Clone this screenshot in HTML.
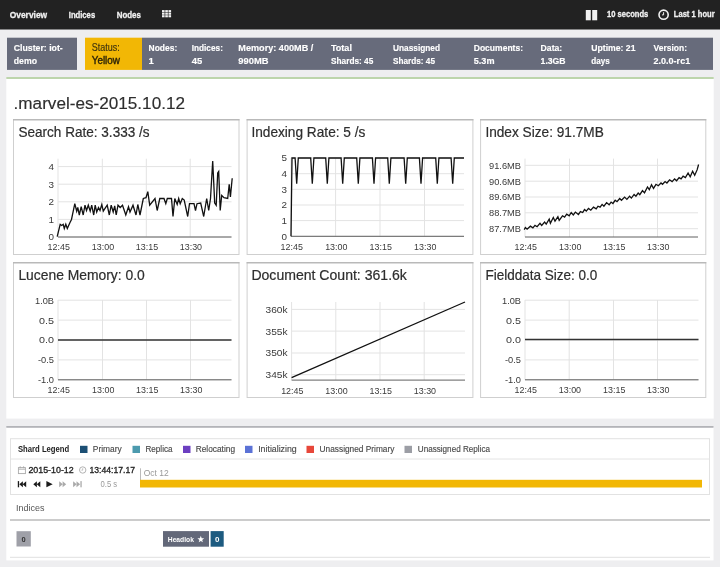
<!DOCTYPE html>
<html><head><meta charset="utf-8"><title>Marvel</title>
<style>html,body{margin:0;padding:0;background:#eeeef0;overflow:hidden;width:720px;height:567px}svg{display:block;transform:translateZ(0);will-change:transform}</style>
</head><body>
<svg width="720" height="567" viewBox="0 0 720 567" font-family='"Liberation Sans", sans-serif'><rect x="0" y="0" width="720" height="567" fill="#eeeef0" />
<rect x="0" y="0" width="720" height="29.5" fill="#222222" />
<text x="9.7" y="17.7" font-size="9.3" fill="#f2f2f2" font-weight="700" text-anchor="start" textLength="37.5" lengthAdjust="spacingAndGlyphs"  stroke="#f2f2f2" stroke-width="0.3">Overview</text>
<text x="68.75" y="17.7" font-size="9.3" fill="#f2f2f2" font-weight="700" text-anchor="start" textLength="26.4" lengthAdjust="spacingAndGlyphs"  stroke="#f2f2f2" stroke-width="0.3">Indices</text>
<text x="116.7" y="17.7" font-size="9.3" fill="#f2f2f2" font-weight="700" text-anchor="start" textLength="24.2" lengthAdjust="spacingAndGlyphs"  stroke="#f2f2f2" stroke-width="0.3">Nodes</text>
<rect x="162.0" y="10.1" width="2.6" height="2.1" fill="#f2f2f2" />
<rect x="162.0" y="12.649999999999999" width="2.6" height="2.1" fill="#f2f2f2" />
<rect x="162.0" y="15.2" width="2.6" height="2.1" fill="#f2f2f2" />
<rect x="165.25" y="10.1" width="2.6" height="2.1" fill="#f2f2f2" />
<rect x="165.25" y="12.649999999999999" width="2.6" height="2.1" fill="#f2f2f2" />
<rect x="165.25" y="15.2" width="2.6" height="2.1" fill="#f2f2f2" />
<rect x="168.5" y="10.1" width="2.6" height="2.1" fill="#f2f2f2" />
<rect x="168.5" y="12.649999999999999" width="2.6" height="2.1" fill="#f2f2f2" />
<rect x="168.5" y="15.2" width="2.6" height="2.1" fill="#f2f2f2" />
<rect x="585.8" y="10" width="5" height="10.3" fill="#f2f2f2" />
<rect x="592.2" y="10" width="5" height="10.3" fill="#f2f2f2" />
<text x="607" y="17.1" font-size="9.0" fill="#f2f2f2" font-weight="700" text-anchor="start" textLength="41.3" lengthAdjust="spacingAndGlyphs"  stroke="#f2f2f2" stroke-width="0.3">10 seconds</text>
<circle cx="663.6" cy="14.7" r="4.6" fill="none" stroke="#f2f2f2" stroke-width="1.6"/>
<path d="M663.6 12.2 V14.9 H662" fill="none" stroke="#f2f2f2" stroke-width="1"/>
<text x="673.8" y="17.0" font-size="9.0" fill="#f2f2f2" font-weight="700" text-anchor="start" textLength="40.8" lengthAdjust="spacingAndGlyphs"  stroke="#f2f2f2" stroke-width="0.3">Last 1 hour</text>
<rect x="7" y="37.7" width="70" height="32.2" fill="#676b7b" />
<rect x="85" y="37.7" width="57" height="32.2" fill="#f2b705" />
<rect x="142" y="37.7" width="571" height="32.2" fill="#676b7b" />
<text x="13.7" y="51.1" font-size="9.6" fill="#ffffff" font-weight="700" text-anchor="start" textLength="49.1" lengthAdjust="spacingAndGlyphs"  stroke="#ffffff" stroke-width="0.15">Cluster: iot-</text>
<text x="13.7" y="63.9" font-size="9.6" fill="#ffffff" font-weight="700" text-anchor="start" textLength="23.3" lengthAdjust="spacingAndGlyphs"  stroke="#ffffff" stroke-width="0.15">demo</text>
<text x="91.7" y="51.1" font-size="10" fill="#3d3310" font-weight="400" text-anchor="start" textLength="28" lengthAdjust="spacingAndGlyphs"  stroke="#3d3310" stroke-width="0.15">Status:</text>
<text x="91.7" y="63.9" font-size="10" fill="#2a2208" font-weight="400" text-anchor="start" textLength="28.3" lengthAdjust="spacingAndGlyphs"  stroke="#2a2208" stroke-width="0.35">Yellow</text>
<text x="148.6" y="51.1" font-size="9.6" fill="#ffffff" font-weight="700" text-anchor="start" textLength="28.6" lengthAdjust="spacingAndGlyphs"  stroke="#ffffff" stroke-width="0.15">Nodes:</text>
<text x="148.6" y="63.9" font-size="9.6" fill="#ffffff" font-weight="700" text-anchor="start"  stroke="#ffffff" stroke-width="0.15">1</text>
<text x="191.7" y="51.1" font-size="9.6" fill="#ffffff" font-weight="700" text-anchor="start" textLength="31.2" lengthAdjust="spacingAndGlyphs"  stroke="#ffffff" stroke-width="0.15">Indices:</text>
<text x="191.7" y="63.9" font-size="9.6" fill="#ffffff" font-weight="700" text-anchor="start" textLength="10.5" lengthAdjust="spacingAndGlyphs"  stroke="#ffffff" stroke-width="0.15">45</text>
<text x="238.3" y="51.1" font-size="9.6" fill="#ffffff" font-weight="700" text-anchor="start" textLength="75" lengthAdjust="spacingAndGlyphs"  stroke="#ffffff" stroke-width="0.15">Memory: 400MB /</text>
<text x="238.3" y="63.9" font-size="9.6" fill="#ffffff" font-weight="700" text-anchor="start" textLength="30.2" lengthAdjust="spacingAndGlyphs"  stroke="#ffffff" stroke-width="0.15">990MB</text>
<text x="331" y="51.1" font-size="9.6" fill="#ffffff" font-weight="700" text-anchor="start" textLength="20.9" lengthAdjust="spacingAndGlyphs"  stroke="#ffffff" stroke-width="0.15">Total</text>
<text x="331" y="63.9" font-size="9.6" fill="#ffffff" font-weight="700" text-anchor="start" textLength="42.3" lengthAdjust="spacingAndGlyphs"  stroke="#ffffff" stroke-width="0.15">Shards: 45</text>
<text x="393" y="51.1" font-size="9.6" fill="#ffffff" font-weight="700" text-anchor="start" textLength="47" lengthAdjust="spacingAndGlyphs"  stroke="#ffffff" stroke-width="0.15">Unassigned</text>
<text x="393" y="63.9" font-size="9.6" fill="#ffffff" font-weight="700" text-anchor="start" textLength="42" lengthAdjust="spacingAndGlyphs"  stroke="#ffffff" stroke-width="0.15">Shards: 45</text>
<text x="473.75" y="51.1" font-size="9.6" fill="#ffffff" font-weight="700" text-anchor="start" textLength="49.25" lengthAdjust="spacingAndGlyphs"  stroke="#ffffff" stroke-width="0.15">Documents:</text>
<text x="473.75" y="63.9" font-size="9.6" fill="#ffffff" font-weight="700" text-anchor="start" textLength="20.75" lengthAdjust="spacingAndGlyphs"  stroke="#ffffff" stroke-width="0.15">5.3m</text>
<text x="540.6" y="51.1" font-size="9.6" fill="#ffffff" font-weight="700" text-anchor="start" textLength="21.6" lengthAdjust="spacingAndGlyphs"  stroke="#ffffff" stroke-width="0.15">Data:</text>
<text x="540.6" y="63.9" font-size="9.6" fill="#ffffff" font-weight="700" text-anchor="start" textLength="25" lengthAdjust="spacingAndGlyphs"  stroke="#ffffff" stroke-width="0.15">1.3GB</text>
<text x="591.2" y="51.1" font-size="9.6" fill="#ffffff" font-weight="700" text-anchor="start" textLength="44.3" lengthAdjust="spacingAndGlyphs"  stroke="#ffffff" stroke-width="0.15">Uptime: 21</text>
<text x="591.2" y="63.9" font-size="9.6" fill="#ffffff" font-weight="700" text-anchor="start" textLength="18.5" lengthAdjust="spacingAndGlyphs"  stroke="#ffffff" stroke-width="0.15">days</text>
<text x="653.5" y="51.1" font-size="9.6" fill="#ffffff" font-weight="700" text-anchor="start" textLength="33.5" lengthAdjust="spacingAndGlyphs"  stroke="#ffffff" stroke-width="0.15">Version:</text>
<text x="653.5" y="63.9" font-size="9.6" fill="#ffffff" font-weight="700" text-anchor="start" textLength="36.7" lengthAdjust="spacingAndGlyphs"  stroke="#ffffff" stroke-width="0.15">2.0.0-rc1</text>
<rect x="6.3" y="77" width="707.4" height="341.6" fill="#ffffff" />
<rect x="6.3" y="77.3" width="707.4" height="1.4" fill="#a2c489" />
<text x="13.6" y="108.8" font-size="16.3" fill="#2e2e2e" font-weight="400" text-anchor="start" textLength="171.4" lengthAdjust="spacingAndGlyphs"  stroke="#2e2e2e" stroke-width="0.15">.marvel-es-2015.10.12</text>
<rect x="13.5" y="119.5" width="225.5" height="135" fill="#ffffff" stroke="#cfcfcf" stroke-width="1"/>
<line x1="13.0" y1="119.75" x2="239.5" y2="119.75" stroke="#b9b9b9" stroke-width="1.5" />
<text x="18.4" y="137.4" font-size="14.2" fill="#2e2e2e" font-weight="400" text-anchor="start" textLength="131.2" lengthAdjust="spacingAndGlyphs"  stroke="#2e2e2e" stroke-width="0.2">Search Rate: 3.333 /s</text>
<line x1="58" y1="237.0" x2="231.5" y2="237.0" stroke="#e3e3e3" stroke-width="1" />
<line x1="58" y1="219.4" x2="231.5" y2="219.4" stroke="#e3e3e3" stroke-width="1" />
<line x1="58" y1="201.8" x2="231.5" y2="201.8" stroke="#e3e3e3" stroke-width="1" />
<line x1="58" y1="184.2" x2="231.5" y2="184.2" stroke="#e3e3e3" stroke-width="1" />
<line x1="58" y1="166.6" x2="231.5" y2="166.6" stroke="#e3e3e3" stroke-width="1" />
<line x1="58" y1="158.7" x2="58" y2="237.0" stroke="#e3e3e3" stroke-width="1" />
<line x1="102.3" y1="158.7" x2="102.3" y2="237.0" stroke="#e3e3e3" stroke-width="1" />
<line x1="146.3" y1="158.7" x2="146.3" y2="237.0" stroke="#e3e3e3" stroke-width="1" />
<line x1="190.2" y1="158.7" x2="190.2" y2="237.0" stroke="#e3e3e3" stroke-width="1" />
<line x1="58" y1="237.0" x2="231.5" y2="237.0" stroke="#606060" stroke-width="1.0" />
<text x="54" y="240.4" font-size="9.6" fill="#3a3a3a" font-weight="400" text-anchor="end" textLength="5.5" lengthAdjust="spacingAndGlyphs" >0</text>
<text x="54" y="222.8" font-size="9.6" fill="#3a3a3a" font-weight="400" text-anchor="end" textLength="5.5" lengthAdjust="spacingAndGlyphs" >1</text>
<text x="54" y="205.20000000000002" font-size="9.6" fill="#3a3a3a" font-weight="400" text-anchor="end" textLength="5.5" lengthAdjust="spacingAndGlyphs" >2</text>
<text x="54" y="187.6" font-size="9.6" fill="#3a3a3a" font-weight="400" text-anchor="end" textLength="5.5" lengthAdjust="spacingAndGlyphs" >3</text>
<text x="54" y="170.0" font-size="9.6" fill="#3a3a3a" font-weight="400" text-anchor="end" textLength="5.5" lengthAdjust="spacingAndGlyphs" >4</text>
<text x="58.7" y="250.4" font-size="9.8" fill="#3a3a3a" font-weight="400" text-anchor="middle" textLength="22.3" lengthAdjust="spacingAndGlyphs" >12:45</text>
<text x="103.0" y="250.4" font-size="9.8" fill="#3a3a3a" font-weight="400" text-anchor="middle" textLength="22.3" lengthAdjust="spacingAndGlyphs" >13:00</text>
<text x="147.0" y="250.4" font-size="9.8" fill="#3a3a3a" font-weight="400" text-anchor="middle" textLength="22.3" lengthAdjust="spacingAndGlyphs" >13:15</text>
<text x="190.89999999999998" y="250.4" font-size="9.8" fill="#3a3a3a" font-weight="400" text-anchor="middle" textLength="22.3" lengthAdjust="spacingAndGlyphs" >13:30</text>
<path d="M57.2 236.7 L60.2 224.3 L61.7 225.5 L63.2 224.3 L64.3 228.5 L65.8 224.3 L67.3 228.5 L70.0 222.5 L71.5 219.5 L74.8 203.7 L76.7 211.2 L77.8 207.5 L79.3 215.0 L81.2 206.7 L83.2 215.0 L85.0 205.2 L86.5 210.5 L88.3 205.2 L90.2 211.2 L91.7 205.2 L93.7 215.0 L95.2 205.2 L96.7 212.0 L98.5 207.5 L100.0 210.5 L101.8 204.5 L103.3 211.2 L105.2 208.2 L107.2 205.2 L109.3 215.0 L111.2 205.2 L113.2 212.0 L114.7 205.9 L116.2 215.0 L118.0 205.2 L120.2 207.5 L122.5 205.2 L125.8 215.0 L128.5 206.7 L130.0 212.0 L133.0 205.2 L136.0 215.0 L137.8 204.5 L140.0 215.0 L143.3 198.5 L146.0 197.7 L147.8 191.7 L149.7 205.2 L155.0 198.5 L157.2 210.5 L159.8 198.5 L164.0 198.5 L165.8 203.7 L167.3 198.5 L171.5 198.5 L173.0 216.5 L174.8 198.5 L177.2 204.5 L178.7 198.5 L180.2 203.7 L182.3 198.5 L184.2 200.0 L187.7 216.5 L189.5 203.7 L194.0 203.7 L195.5 210.5 L197.0 203.7 L200.7 203.0 L203.7 216.5 L206.7 198.5 L208.7 210.5 L210.5 198.5 L212.7 161.0 L214.7 203.0 L216.2 205.2 L217.7 173.0 L218.7 171.5 L220.2 210.5 L221.7 195.5 L224.0 197.7 L227.7 198.5 L229.2 184.2 L230.4 197.0 L232.2 178.2" fill="none" stroke="#111111" stroke-width="1.3" stroke-linejoin="miter"/>
<rect x="247.1" y="119.5" width="225.79999999999998" height="135" fill="#ffffff" stroke="#cfcfcf" stroke-width="1"/>
<line x1="246.6" y1="119.75" x2="473.4" y2="119.75" stroke="#b9b9b9" stroke-width="1.5" />
<text x="251.4" y="137.4" font-size="14.2" fill="#2e2e2e" font-weight="400" text-anchor="start" textLength="114" lengthAdjust="spacingAndGlyphs"  stroke="#2e2e2e" stroke-width="0.2">Indexing Rate: 5 /s</text>
<line x1="291" y1="236.3" x2="464" y2="236.3" stroke="#e3e3e3" stroke-width="1" />
<line x1="291" y1="220.6" x2="464" y2="220.6" stroke="#e3e3e3" stroke-width="1" />
<line x1="291" y1="205" x2="464" y2="205" stroke="#e3e3e3" stroke-width="1" />
<line x1="291" y1="189.3" x2="464" y2="189.3" stroke="#e3e3e3" stroke-width="1" />
<line x1="291" y1="173.7" x2="464" y2="173.7" stroke="#e3e3e3" stroke-width="1" />
<line x1="291" y1="158" x2="464" y2="158" stroke="#e3e3e3" stroke-width="1" />
<line x1="291" y1="158" x2="291" y2="236.3" stroke="#e3e3e3" stroke-width="1" />
<line x1="335.6" y1="158" x2="335.6" y2="236.3" stroke="#e3e3e3" stroke-width="1" />
<line x1="380" y1="158" x2="380" y2="236.3" stroke="#e3e3e3" stroke-width="1" />
<line x1="424.5" y1="158" x2="424.5" y2="236.3" stroke="#e3e3e3" stroke-width="1" />
<line x1="291" y1="236.3" x2="464" y2="236.3" stroke="#606060" stroke-width="1.0" />
<text x="287" y="239.70000000000002" font-size="9.6" fill="#3a3a3a" font-weight="400" text-anchor="end" textLength="5.5" lengthAdjust="spacingAndGlyphs" >0</text>
<text x="287" y="224.0" font-size="9.6" fill="#3a3a3a" font-weight="400" text-anchor="end" textLength="5.5" lengthAdjust="spacingAndGlyphs" >1</text>
<text x="287" y="208.4" font-size="9.6" fill="#3a3a3a" font-weight="400" text-anchor="end" textLength="5.5" lengthAdjust="spacingAndGlyphs" >2</text>
<text x="287" y="192.70000000000002" font-size="9.6" fill="#3a3a3a" font-weight="400" text-anchor="end" textLength="5.5" lengthAdjust="spacingAndGlyphs" >3</text>
<text x="287" y="177.1" font-size="9.6" fill="#3a3a3a" font-weight="400" text-anchor="end" textLength="5.5" lengthAdjust="spacingAndGlyphs" >4</text>
<text x="287" y="161.4" font-size="9.6" fill="#3a3a3a" font-weight="400" text-anchor="end" textLength="5.5" lengthAdjust="spacingAndGlyphs" >5</text>
<text x="291.7" y="249.70000000000002" font-size="9.8" fill="#3a3a3a" font-weight="400" text-anchor="middle" textLength="22.3" lengthAdjust="spacingAndGlyphs" >12:45</text>
<text x="336.3" y="249.70000000000002" font-size="9.8" fill="#3a3a3a" font-weight="400" text-anchor="middle" textLength="22.3" lengthAdjust="spacingAndGlyphs" >13:00</text>
<text x="380.7" y="249.70000000000002" font-size="9.8" fill="#3a3a3a" font-weight="400" text-anchor="middle" textLength="22.3" lengthAdjust="spacingAndGlyphs" >13:15</text>
<text x="425.2" y="249.70000000000002" font-size="9.8" fill="#3a3a3a" font-weight="400" text-anchor="middle" textLength="22.3" lengthAdjust="spacingAndGlyphs" >13:30</text>
<path d="M291.0 236.3 L292.0 158.0 L295.1 158.0 L296.7 183.8 L298.3 158.0 L310.7 158.0 L312.3 183.8 L313.9 158.0 L325.7 158.0 L327.3 183.8 L328.9 158.0 L341.1 158.0 L342.7 183.8 L344.3 158.0 L356.7 158.0 L358.3 183.8 L359.9 158.0 L372.4 158.0 L374.0 183.8 L375.6 158.0 L387.7 158.0 L389.3 183.8 L390.9 158.0 L404.1 158.0 L405.7 183.8 L407.3 158.0 L419.4 158.0 L421.0 183.8 L422.6 158.0 L435.7 158.0 L437.3 183.8 L438.9 158.0 L451.1 158.0 L452.7 183.8 L454.3 158.0 L464.0 158.0" fill="none" stroke="#111111" stroke-width="1.3" stroke-linejoin="miter"/>
<rect x="480.6" y="119.5" width="225.19999999999993" height="135" fill="#ffffff" stroke="#cfcfcf" stroke-width="1"/>
<line x1="480.1" y1="119.75" x2="706.3" y2="119.75" stroke="#b9b9b9" stroke-width="1.5" />
<text x="485.4" y="137.4" font-size="14.2" fill="#2e2e2e" font-weight="400" text-anchor="start" textLength="118.4" lengthAdjust="spacingAndGlyphs"  stroke="#2e2e2e" stroke-width="0.2">Index Size: 91.7MB</text>
<line x1="525" y1="228.7" x2="698" y2="228.7" stroke="#e3e3e3" stroke-width="1" />
<line x1="525" y1="212.8" x2="698" y2="212.8" stroke="#e3e3e3" stroke-width="1" />
<line x1="525" y1="197" x2="698" y2="197" stroke="#e3e3e3" stroke-width="1" />
<line x1="525" y1="181.2" x2="698" y2="181.2" stroke="#e3e3e3" stroke-width="1" />
<line x1="525" y1="165.3" x2="698" y2="165.3" stroke="#e3e3e3" stroke-width="1" />
<line x1="525" y1="158.6" x2="525" y2="237" stroke="#e3e3e3" stroke-width="1" />
<line x1="569.5" y1="158.6" x2="569.5" y2="237" stroke="#e3e3e3" stroke-width="1" />
<line x1="613.5" y1="158.6" x2="613.5" y2="237" stroke="#e3e3e3" stroke-width="1" />
<line x1="657.5" y1="158.6" x2="657.5" y2="237" stroke="#e3e3e3" stroke-width="1" />
<line x1="525" y1="237" x2="698" y2="237" stroke="#606060" stroke-width="1.0" />
<text x="521" y="232.1" font-size="9.6" fill="#3a3a3a" font-weight="400" text-anchor="end" textLength="32" lengthAdjust="spacingAndGlyphs" >87.7MB</text>
<text x="521" y="216.20000000000002" font-size="9.6" fill="#3a3a3a" font-weight="400" text-anchor="end" textLength="32" lengthAdjust="spacingAndGlyphs" >88.7MB</text>
<text x="521" y="200.4" font-size="9.6" fill="#3a3a3a" font-weight="400" text-anchor="end" textLength="32" lengthAdjust="spacingAndGlyphs" >89.6MB</text>
<text x="521" y="184.6" font-size="9.6" fill="#3a3a3a" font-weight="400" text-anchor="end" textLength="32" lengthAdjust="spacingAndGlyphs" >90.6MB</text>
<text x="521" y="168.70000000000002" font-size="9.6" fill="#3a3a3a" font-weight="400" text-anchor="end" textLength="32" lengthAdjust="spacingAndGlyphs" >91.6MB</text>
<text x="525.7" y="250.4" font-size="9.8" fill="#3a3a3a" font-weight="400" text-anchor="middle" textLength="22.3" lengthAdjust="spacingAndGlyphs" >12:45</text>
<text x="570.2" y="250.4" font-size="9.8" fill="#3a3a3a" font-weight="400" text-anchor="middle" textLength="22.3" lengthAdjust="spacingAndGlyphs" >13:00</text>
<text x="614.2" y="250.4" font-size="9.8" fill="#3a3a3a" font-weight="400" text-anchor="middle" textLength="22.3" lengthAdjust="spacingAndGlyphs" >13:15</text>
<text x="658.2" y="250.4" font-size="9.8" fill="#3a3a3a" font-weight="400" text-anchor="middle" textLength="22.3" lengthAdjust="spacingAndGlyphs" >13:30</text>
<path d="M524.2 229.6 L525.4 227.5 L527.1 229.2 L530.4 226.2 L532.9 227.9 L535.0 225.4 L537.1 226.7 L540.0 223.3 L541.7 225.4 L544.6 222.1 L546.2 224.2 L549.2 219.2 L550.4 223.3 L553.3 217.5 L555.0 221.2 L557.9 216.7 L559.2 220.4 L562.5 215.8 L564.6 217.1 L566.7 214.2 L569.2 215.8 L571.2 212.5 L573.3 215.0 L575.4 212.1 L578.4 214.5 L580.4 211.6 L582.7 212.5 L584.5 209.6 L586.3 211.1 L588.5 208.4 L590.8 210.2 L593.5 207.1 L596.2 208.9 L598.0 206.2 L600.1 207.1 L602.1 204.4 L603.9 206.2 L606.6 202.6 L609.1 204.8 L611.1 202.1 L612.9 203.5 L615.2 200.3 L617.0 201.7 L619.7 198.5 L621.5 200.3 L624.6 197.1 L626.9 199.4 L629.6 196.2 L631.4 198.1 L634.1 194.4 L635.9 196.2 L638.2 193.1 L639.8 194.7 L642.5 190.6 L644.5 192.9 L647.5 187.0 L649.3 189.7 L651.5 184.8 L653.5 188.4 L656.0 184.3 L658.3 185.7 L661.0 183.0 L662.5 184.3 L665.1 181.6 L666.9 183.0 L669.6 179.8 L672.1 181.6 L674.6 178.9 L676.6 180.7 L679.1 177.6 L681.1 178.9 L683.1 176.2 L685.4 177.6 L688.1 173.0 L690.2 176.7 L692.6 171.2 L694.7 175.3 L697.1 169.9 L698.6 164.5" fill="none" stroke="#111111" stroke-width="1.3" stroke-linejoin="miter"/>
<rect x="13.5" y="262.5" width="225.5" height="135" fill="#ffffff" stroke="#cfcfcf" stroke-width="1"/>
<line x1="13.0" y1="262.75" x2="239.5" y2="262.75" stroke="#b9b9b9" stroke-width="1.5" />
<text x="18.4" y="280.4" font-size="14.2" fill="#2e2e2e" font-weight="400" text-anchor="start" textLength="126.4" lengthAdjust="spacingAndGlyphs"  stroke="#2e2e2e" stroke-width="0.2">Lucene Memory: 0.0</text>
<line x1="58" y1="379.8" x2="231.5" y2="379.8" stroke="#e3e3e3" stroke-width="1" />
<line x1="58" y1="359.9" x2="231.5" y2="359.9" stroke="#e3e3e3" stroke-width="1" />
<line x1="58" y1="340" x2="231.5" y2="340" stroke="#e3e3e3" stroke-width="1" />
<line x1="58" y1="320.1" x2="231.5" y2="320.1" stroke="#e3e3e3" stroke-width="1" />
<line x1="58" y1="300.2" x2="231.5" y2="300.2" stroke="#e3e3e3" stroke-width="1" />
<line x1="58" y1="300" x2="58" y2="379.8" stroke="#e3e3e3" stroke-width="1" />
<line x1="102.5" y1="300" x2="102.5" y2="379.8" stroke="#e3e3e3" stroke-width="1" />
<line x1="146.5" y1="300" x2="146.5" y2="379.8" stroke="#e3e3e3" stroke-width="1" />
<line x1="190.5" y1="300" x2="190.5" y2="379.8" stroke="#e3e3e3" stroke-width="1" />
<line x1="58" y1="379.8" x2="231.5" y2="379.8" stroke="#606060" stroke-width="1.0" />
<text x="54" y="383.2" font-size="9.6" fill="#3a3a3a" font-weight="400" text-anchor="end" textLength="16" lengthAdjust="spacingAndGlyphs" >-1.0</text>
<text x="54" y="363.29999999999995" font-size="9.6" fill="#3a3a3a" font-weight="400" text-anchor="end" textLength="16" lengthAdjust="spacingAndGlyphs" >-0.5</text>
<text x="54" y="343.4" font-size="9.6" fill="#3a3a3a" font-weight="400" text-anchor="end" textLength="15" lengthAdjust="spacingAndGlyphs" >0.0</text>
<text x="54" y="323.5" font-size="9.6" fill="#3a3a3a" font-weight="400" text-anchor="end" textLength="15" lengthAdjust="spacingAndGlyphs" >0.5</text>
<text x="54" y="303.59999999999997" font-size="9.6" fill="#3a3a3a" font-weight="400" text-anchor="end" textLength="19" lengthAdjust="spacingAndGlyphs" >1.0B</text>
<text x="58.7" y="393.2" font-size="9.8" fill="#3a3a3a" font-weight="400" text-anchor="middle" textLength="22.3" lengthAdjust="spacingAndGlyphs" >12:45</text>
<text x="103.2" y="393.2" font-size="9.8" fill="#3a3a3a" font-weight="400" text-anchor="middle" textLength="22.3" lengthAdjust="spacingAndGlyphs" >13:00</text>
<text x="147.2" y="393.2" font-size="9.8" fill="#3a3a3a" font-weight="400" text-anchor="middle" textLength="22.3" lengthAdjust="spacingAndGlyphs" >13:15</text>
<text x="191.2" y="393.2" font-size="9.8" fill="#3a3a3a" font-weight="400" text-anchor="middle" textLength="22.3" lengthAdjust="spacingAndGlyphs" >13:30</text>
<line x1="58" y1="340" x2="231.5" y2="340" stroke="#333333" stroke-width="1.4" />
<rect x="247.1" y="262.5" width="225.79999999999998" height="135" fill="#ffffff" stroke="#cfcfcf" stroke-width="1"/>
<line x1="246.6" y1="262.75" x2="473.4" y2="262.75" stroke="#b9b9b9" stroke-width="1.5" />
<text x="251.4" y="280.4" font-size="14.2" fill="#2e2e2e" font-weight="400" text-anchor="start" textLength="155.5" lengthAdjust="spacingAndGlyphs"  stroke="#2e2e2e" stroke-width="0.2">Document Count: 361.6k</text>
<line x1="291.6" y1="374.7" x2="465" y2="374.7" stroke="#e3e3e3" stroke-width="1" />
<line x1="291.6" y1="353" x2="465" y2="353" stroke="#e3e3e3" stroke-width="1" />
<line x1="291.6" y1="331.1" x2="465" y2="331.1" stroke="#e3e3e3" stroke-width="1" />
<line x1="291.6" y1="309.4" x2="465" y2="309.4" stroke="#e3e3e3" stroke-width="1" />
<line x1="291.6" y1="302" x2="291.6" y2="380.1" stroke="#e3e3e3" stroke-width="1" />
<line x1="335.8" y1="302" x2="335.8" y2="380.1" stroke="#e3e3e3" stroke-width="1" />
<line x1="380" y1="302" x2="380" y2="380.1" stroke="#e3e3e3" stroke-width="1" />
<line x1="424.2" y1="302" x2="424.2" y2="380.1" stroke="#e3e3e3" stroke-width="1" />
<line x1="291.6" y1="380.1" x2="465" y2="380.1" stroke="#606060" stroke-width="1.0" />
<text x="287.6" y="378.09999999999997" font-size="9.6" fill="#3a3a3a" font-weight="400" text-anchor="end" textLength="22" lengthAdjust="spacingAndGlyphs" >345k</text>
<text x="287.6" y="356.4" font-size="9.6" fill="#3a3a3a" font-weight="400" text-anchor="end" textLength="22" lengthAdjust="spacingAndGlyphs" >350k</text>
<text x="287.6" y="334.5" font-size="9.6" fill="#3a3a3a" font-weight="400" text-anchor="end" textLength="22" lengthAdjust="spacingAndGlyphs" >355k</text>
<text x="287.6" y="312.79999999999995" font-size="9.6" fill="#3a3a3a" font-weight="400" text-anchor="end" textLength="22" lengthAdjust="spacingAndGlyphs" >360k</text>
<text x="292.3" y="393.5" font-size="9.8" fill="#3a3a3a" font-weight="400" text-anchor="middle" textLength="22.3" lengthAdjust="spacingAndGlyphs" >12:45</text>
<text x="336.5" y="393.5" font-size="9.8" fill="#3a3a3a" font-weight="400" text-anchor="middle" textLength="22.3" lengthAdjust="spacingAndGlyphs" >13:00</text>
<text x="380.7" y="393.5" font-size="9.8" fill="#3a3a3a" font-weight="400" text-anchor="middle" textLength="22.3" lengthAdjust="spacingAndGlyphs" >13:15</text>
<text x="424.9" y="393.5" font-size="9.8" fill="#3a3a3a" font-weight="400" text-anchor="middle" textLength="22.3" lengthAdjust="spacingAndGlyphs" >13:30</text>
<path d="M291.6 377.6 L465.0 302.0" fill="none" stroke="#111111" stroke-width="1.3" stroke-linejoin="miter"/>
<rect x="480.6" y="262.5" width="225.19999999999993" height="135" fill="#ffffff" stroke="#cfcfcf" stroke-width="1"/>
<line x1="480.1" y1="262.75" x2="706.3" y2="262.75" stroke="#b9b9b9" stroke-width="1.5" />
<text x="485.4" y="280.4" font-size="14.2" fill="#2e2e2e" font-weight="400" text-anchor="start" textLength="112" lengthAdjust="spacingAndGlyphs"  stroke="#2e2e2e" stroke-width="0.2">Fielddata Size: 0.0</text>
<line x1="525" y1="379.8" x2="698.5" y2="379.8" stroke="#e3e3e3" stroke-width="1" />
<line x1="525" y1="359.9" x2="698.5" y2="359.9" stroke="#e3e3e3" stroke-width="1" />
<line x1="525" y1="340" x2="698.5" y2="340" stroke="#e3e3e3" stroke-width="1" />
<line x1="525" y1="320.1" x2="698.5" y2="320.1" stroke="#e3e3e3" stroke-width="1" />
<line x1="525" y1="300.2" x2="698.5" y2="300.2" stroke="#e3e3e3" stroke-width="1" />
<line x1="525" y1="300" x2="525" y2="379.8" stroke="#e3e3e3" stroke-width="1" />
<line x1="569.2" y1="300" x2="569.2" y2="379.8" stroke="#e3e3e3" stroke-width="1" />
<line x1="613.5" y1="300" x2="613.5" y2="379.8" stroke="#e3e3e3" stroke-width="1" />
<line x1="657.5" y1="300" x2="657.5" y2="379.8" stroke="#e3e3e3" stroke-width="1" />
<line x1="525" y1="379.8" x2="698.5" y2="379.8" stroke="#606060" stroke-width="1.0" />
<text x="521" y="383.2" font-size="9.6" fill="#3a3a3a" font-weight="400" text-anchor="end" textLength="16" lengthAdjust="spacingAndGlyphs" >-1.0</text>
<text x="521" y="363.29999999999995" font-size="9.6" fill="#3a3a3a" font-weight="400" text-anchor="end" textLength="16" lengthAdjust="spacingAndGlyphs" >-0.5</text>
<text x="521" y="343.4" font-size="9.6" fill="#3a3a3a" font-weight="400" text-anchor="end" textLength="15" lengthAdjust="spacingAndGlyphs" >0.0</text>
<text x="521" y="323.5" font-size="9.6" fill="#3a3a3a" font-weight="400" text-anchor="end" textLength="15" lengthAdjust="spacingAndGlyphs" >0.5</text>
<text x="521" y="303.59999999999997" font-size="9.6" fill="#3a3a3a" font-weight="400" text-anchor="end" textLength="19" lengthAdjust="spacingAndGlyphs" >1.0B</text>
<text x="525.7" y="393.2" font-size="9.8" fill="#3a3a3a" font-weight="400" text-anchor="middle" textLength="22.3" lengthAdjust="spacingAndGlyphs" >12:45</text>
<text x="569.9000000000001" y="393.2" font-size="9.8" fill="#3a3a3a" font-weight="400" text-anchor="middle" textLength="22.3" lengthAdjust="spacingAndGlyphs" >13:00</text>
<text x="614.2" y="393.2" font-size="9.8" fill="#3a3a3a" font-weight="400" text-anchor="middle" textLength="22.3" lengthAdjust="spacingAndGlyphs" >13:15</text>
<text x="658.2" y="393.2" font-size="9.8" fill="#3a3a3a" font-weight="400" text-anchor="middle" textLength="22.3" lengthAdjust="spacingAndGlyphs" >13:30</text>
<line x1="525" y1="339.5" x2="698.5" y2="339.5" stroke="#333333" stroke-width="1.4" />
<rect x="6.3" y="427" width="707.2" height="133.4" fill="#ffffff" />
<rect x="6.3" y="426" width="707.2" height="1.8" fill="#b3b4b8" />
<rect x="10.5" y="438.7" width="699" height="55.8" fill="#ffffff" stroke="#e2e2e2" stroke-width="1"/>
<line x1="10.5" y1="459" x2="709.5" y2="459" stroke="#e4e4e4" stroke-width="1" />
<text x="18" y="451.8" font-size="9" fill="#222222" font-weight="700" text-anchor="start" textLength="51.2" lengthAdjust="spacingAndGlyphs" >Shard Legend</text>
<rect x="80" y="445.8" width="7.5" height="7.2" fill="#1c4f74" />
<text x="92.8" y="451.9" font-size="9" fill="#4a4a4a" font-weight="400" text-anchor="start" textLength="28.9" lengthAdjust="spacingAndGlyphs"  stroke="#4a4a4a" stroke-width="0.15">Primary</text>
<rect x="132.5" y="445.8" width="7.5" height="7.2" fill="#4c9aae" />
<text x="145.5" y="451.9" font-size="9" fill="#4a4a4a" font-weight="400" text-anchor="start" textLength="27" lengthAdjust="spacingAndGlyphs"  stroke="#4a4a4a" stroke-width="0.15">Replica</text>
<rect x="183" y="445.8" width="7.5" height="7.2" fill="#6c3fc1" />
<text x="195.75" y="451.9" font-size="9" fill="#4a4a4a" font-weight="400" text-anchor="start" textLength="39.25" lengthAdjust="spacingAndGlyphs"  stroke="#4a4a4a" stroke-width="0.15">Relocating</text>
<rect x="245" y="445.8" width="7.5" height="7.2" fill="#5b72d6" />
<text x="258.2" y="451.9" font-size="9" fill="#4a4a4a" font-weight="400" text-anchor="start" textLength="38.5" lengthAdjust="spacingAndGlyphs"  stroke="#4a4a4a" stroke-width="0.15">Initializing</text>
<rect x="306.5" y="445.8" width="7.5" height="7.2" fill="#e7473a" />
<text x="319.6" y="451.9" font-size="9" fill="#4a4a4a" font-weight="400" text-anchor="start" textLength="74.8" lengthAdjust="spacingAndGlyphs"  stroke="#4a4a4a" stroke-width="0.15">Unassigned Primary</text>
<rect x="404.5" y="445.8" width="7.5" height="7.2" fill="#9c9ea5" />
<text x="417.8" y="451.9" font-size="9" fill="#4a4a4a" font-weight="400" text-anchor="start" textLength="72.2" lengthAdjust="spacingAndGlyphs"  stroke="#4a4a4a" stroke-width="0.15">Unassigned Replica</text>
<rect x="18.4" y="467.6" width="7" height="6" fill="none" stroke="#aaaaaa" stroke-width="0.9"/>
<line x1="18.4" y1="469.2" x2="25.4" y2="469.2" stroke="#aaaaaa" stroke-width="0.9" />
<line x1="20.2" y1="466.3" x2="20.2" y2="468.2" stroke="#aaaaaa" stroke-width="0.9" />
<line x1="23.6" y1="466.3" x2="23.6" y2="468.2" stroke="#aaaaaa" stroke-width="0.9" />
<text x="28.4" y="472.8" font-size="9" fill="#222222" font-weight="400" text-anchor="start" textLength="45.3" lengthAdjust="spacingAndGlyphs"  stroke="#222222" stroke-width="0.32">2015-10-12</text>
<circle cx="82.7" cy="470" r="3.2" fill="none" stroke="#aaaaaa" stroke-width="0.9"/>
<path d="M82.7 468.2 V470.2 H81.4" fill="none" stroke="#aaaaaa" stroke-width="0.7"/>
<text x="89.4" y="472.8" font-size="9" fill="#222222" font-weight="400" text-anchor="start" textLength="45.6" lengthAdjust="spacingAndGlyphs"  stroke="#222222" stroke-width="0.32">13:44:17.17</text>
<rect x="17.8" y="481.1" width="1.3" height="6.2" fill="#1a1a1a" />
<path d="M19.3 484.2 L22.900000000000002 481.2 L22.900000000000002 487.2 Z" fill="#1a1a1a"/>
<path d="M22.6 484.2 L26.200000000000003 481.2 L26.200000000000003 487.2 Z" fill="#1a1a1a"/>
<path d="M33.3 484.2 L36.9 481.2 L36.9 487.2 Z" fill="#1a1a1a"/>
<path d="M36.7 484.2 L40.300000000000004 481.2 L40.300000000000004 487.2 Z" fill="#1a1a1a"/>
<path d="M52.699999999999996 484.2 L46.4 481.09999999999997 L46.4 487.3 Z" fill="#1a1a1a"/>
<path d="M62.800000000000004 484.2 L59.2 481.2 L59.2 487.2 Z" fill="#aaaaaa"/>
<path d="M66.2 484.2 L62.6 481.2 L62.6 487.2 Z" fill="#aaaaaa"/>
<path d="M76.69999999999999 484.2 L73.1 481.2 L73.1 487.2 Z" fill="#aaaaaa"/>
<path d="M80.1 484.2 L76.5 481.2 L76.5 487.2 Z" fill="#aaaaaa"/>
<rect x="80.4" y="481.1" width="1.3" height="6.2" fill="#aaaaaa" />
<text x="100.6" y="487.2" font-size="9" fill="#999999" font-weight="400" text-anchor="start" textLength="16.6" lengthAdjust="spacingAndGlyphs" >0.5 s</text>
<line x1="140.5" y1="468.3" x2="140.5" y2="480" stroke="#bbbbbb" stroke-width="1" />
<text x="143.75" y="475.5" font-size="9" fill="#999999" font-weight="400" text-anchor="start" textLength="25" lengthAdjust="spacingAndGlyphs" >Oct 12</text>
<rect x="140" y="479.8" width="562" height="7.7" fill="#f2b705" />
<text x="16" y="510.8" font-size="9.5" fill="#555555" font-weight="400" text-anchor="start" textLength="28.5" lengthAdjust="spacingAndGlyphs" >Indices</text>
<line x1="10" y1="520" x2="710" y2="520" stroke="#999999" stroke-width="1.2" />
<rect x="16.5" y="531.2" width="14.3" height="15.3" fill="#9fa0a8" />
<text x="23.6" y="541.8" font-size="7.5" fill="#333333" font-weight="700" text-anchor="middle" >0</text>
<rect x="163" y="531.1" width="46" height="15.6" fill="#636879" />
<text x="167.8" y="541.7" font-size="8" fill="#ffffff" font-weight="700" text-anchor="start" textLength="26.1" lengthAdjust="spacingAndGlyphs" >Headlok</text>
<path d="M200.8 535.8 L201.7 538.2 L204.2 538.3 L202.2 539.9 L202.9 542.3 L200.8 540.9 L198.7 542.3 L199.4 539.9 L197.4 538.3 L199.9 538.2 Z" fill="#ffffff"/>
<rect x="210.6" y="531.1" width="13.1" height="15.6" fill="#1d5b80" />
<text x="217.2" y="541.7" font-size="8" fill="#ffffff" font-weight="700" text-anchor="middle" >0</text>
<line x1="10" y1="557.3" x2="710" y2="557.3" stroke="#e0e0e0" stroke-width="1" /></svg>
</body></html>
